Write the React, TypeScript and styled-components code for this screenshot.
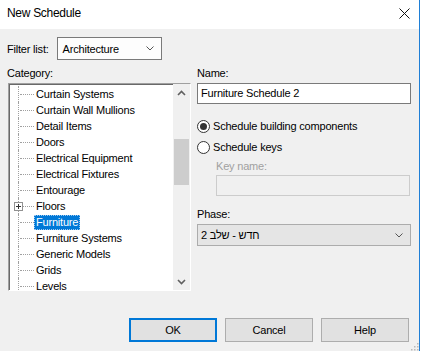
import styled, { createGlobalStyle } from "styled-components";

const GlobalStyle = createGlobalStyle`
  html, body {
    margin: 0;
    padding: 0;
    background: #ffffff;
  }
  body {
    font-family: "Liberation Sans", Arial, sans-serif;
    font-size: 11px;
    letter-spacing: -0.2px;
    color: #000;
  }
`;

const categories = [
  "Curtain Systems",
  "Curtain Wall Mullions",
  "Detail Items",
  "Doors",
  "Electrical Equipment",
  "Electrical Fixtures",
  "Entourage",
  "Floors",
  "Furniture",
  "Furniture Systems",
  "Generic Models",
  "Grids",
  "Levels",
];

const Chevron = () => (
  <svg width={8} height={5} viewBox="0 0 8 5">
    <polyline points="0.5,0.5 4,4 7.5,0.5" fill="none" stroke="#555" strokeWidth="1" />
  </svg>
);

export default function App() {
  return (
    <>
      <GlobalStyle />
      <Frame>
        <TitleBar>
          <Title>New Schedule</Title>
          <CloseBtn>
            <svg width="11" height="11" viewBox="0 0 11 11">
              <path d="M0.5 0.5 L10.5 10.5 M10.5 0.5 L0.5 10.5" stroke="#111" strokeWidth="1" />
            </svg>
          </CloseBtn>
        </TitleBar>
        <Body>
          <FilterRow>
            <span>Filter list:</span>
            <Combo width={105}>
              <span>Architecture</span>
              <Chevron />
            </Combo>
          </FilterRow>

          <Columns>
            <LeftCol>
              <Label>Category:</Label>
              <TreeBox>
                <TreeList>
                  {categories.map((c) => (
                    <TreeRow key={c}>
                      <Connector>
                        {c === "Floors" && (
                          <Expander>
                            <svg width="9" height="9" viewBox="0 0 9 9">
                              <rect x="0.5" y="0.5" width="8" height="8" fill="#fff" stroke="#919191" />
                              <path d="M2 4.5 H7 M4.5 2 V7" stroke="#333" strokeWidth="1" />
                            </svg>
                          </Expander>
                        )}
                      </Connector>
                      <ItemText selected={c === "Furniture"}>{c}</ItemText>
                    </TreeRow>
                  ))}
                </TreeList>
                <ScrollBar>
                  <ScrollArrow>
                    <svg width="9" height="6" viewBox="0 0 9 6">
                      <polyline points="1,5 4.5,1.5 8,5" fill="none" stroke="#606060" strokeWidth="1.6" />
                    </svg>
                  </ScrollArrow>
                  <ScrollTrack>
                    <Thumb />
                  </ScrollTrack>
                  <ScrollArrow>
                    <svg width="9" height="6" viewBox="0 0 9 6">
                      <polyline points="1,1 4.5,4.5 8,1" fill="none" stroke="#606060" strokeWidth="1.6" />
                    </svg>
                  </ScrollArrow>
                </ScrollBar>
              </TreeBox>
            </LeftCol>

            <RightCol>
              <Label>Name:</Label>
              <TextBox>Furniture Schedule 2</TextBox>
              <RadioRow first>
                <Radio checked />
                <span>Schedule building components</span>
              </RadioRow>
              <RadioRow>
                <Radio />
                <span>Schedule keys</span>
              </RadioRow>
              <Indented>
                <Label disabled>Key name:</Label>
                <TextBox disabled />
              </Indented>
              <PhaseLabel>Phase:</PhaseLabel>
              <Combo width={214} filled>
                <span>חדש - שלב 2</span>
                <Chevron />
              </Combo>
            </RightCol>
          </Columns>

          <ButtonRow>
            <Button primary>OK</Button>
            <Button>Cancel</Button>
            <Button>Help</Button>
          </ButtonRow>
          <Grip>
            <svg width="10" height="10" viewBox="0 0 10 10">
              {[
                [8, 2],
                [5, 5],
                [8, 5],
                [2, 8],
                [5, 8],
                [8, 8],
              ].map(([x, y]) => (
                <rect key={`${x}-${y}`} x={x} y={y} width="1.5" height="1.5" fill="#b8b8b8" />
              ))}
            </svg>
          </Grip>
        </Body>
      </Frame>
    </>
  );
}

const Frame = styled.div`
  width: 419px;
  height: 351px;
  border-right: 1px solid #1f7fd6;
  display: flex;
  flex-direction: column;
`;

const TitleBar = styled.div`
  height: 29px;
  background: #fff;
  display: flex;
  align-items: center;
  justify-content: space-between;
  padding: 0 9px 3px 7px;
  box-sizing: border-box;
`;

const Title = styled.div`
  font-size: 12px;
  letter-spacing: -0.3px;
`;

const CloseBtn = styled.div`
  display: flex;
  align-items: center;
`;

const Body = styled.div`
  position: relative;
  flex: 1;
  background: #f0f0f0;
  display: flex;
  flex-direction: column;
  padding: 8px 8px 9px 7px;
`;

const FilterRow = styled.div`
  display: flex;
  align-items: center;
  gap: 8px;
  height: 23px;
`;

const Combo = styled.div<{ width: number; filled?: boolean }>`
  box-sizing: border-box;
  width: ${(p) => p.width}px;
  height: ${(p) => (p.filled ? 22 : 23)}px;
  border: 1px solid ${(p) => (p.filled ? "#acacac" : "#7a7a7a")};
  background: ${(p) => (p.filled ? "#e5e5e5" : "#fdfdfd")};
  display: flex;
  align-items: center;
  justify-content: space-between;
  padding: 0 7px 0 ${(p) => (p.filled ? 3 : 5)}px;
`;

const Columns = styled.div`
  display: flex;
  gap: 6px;
  margin-top: 6px;
`;

const LeftCol = styled.div`
  width: 184px;
  display: flex;
  flex-direction: column;
`;

const RightCol = styled.div`
  width: 214px;
  display: flex;
  flex-direction: column;
`;

const Label = styled.div<{ disabled?: boolean }>`
  height: 15px;
  line-height: 15px;
  margin-bottom: ${(p) => (p.disabled ? 1 : 2)}px;
  color: ${(p) => (p.disabled ? "#a0a0a0" : "#000")};
`;

const PhaseLabel = styled(Label)`
  margin-top: 11px;
`;

const TreeBox = styled.div`
  box-sizing: border-box;
  margin-left: 1px;
  width: 183px;
  height: 208px;
  background: #fff;
  border: 1px solid;
  border-color: #a0a0a0 #ffffff #ffffff #a0a0a0;
  box-shadow: inset 1px 1px 0 #696969;
  display: flex;
  overflow: hidden;
`;

const TreeList = styled.div`
  flex: 1;
  padding: 2px 0 0 9px;
  overflow: hidden;
  display: flex;
  flex-direction: column;
`;

const TreeRow = styled.div`
  height: 16px;
  flex-shrink: 0;
  display: flex;
  align-items: stretch;
`;

const Connector = styled.div`
  position: relative;
  width: 15px;
  border-left: 1px dotted #a0a0a0;
  &::after {
    content: "";
    position: absolute;
    left: 1px;
    right: 0;
    top: 8px;
    border-top: 1px dotted #a0a0a0;
  }
`;

const Expander = styled.div`
  position: absolute;
  left: -5px;
  top: 4px;
  z-index: 1;
  display: flex;
`;

const ItemText = styled.div<{ selected?: boolean }>`
  align-self: center;
  height: 15px;
  line-height: 15px;
  padding: 0 2px;
  white-space: nowrap;
  box-sizing: border-box;
  background: ${(p) => (p.selected ? "#0078d7" : "transparent")};
  color: ${(p) => (p.selected ? "#fff" : "#000")};
  outline: ${(p) => (p.selected ? "1px dotted #9ec8f0" : "none")};
  outline-offset: -1px;
`;

const ScrollBar = styled.div`
  width: 17px;
  flex-shrink: 0;
  background: #f0f0f0;
  display: flex;
  flex-direction: column;
`;

const ScrollArrow = styled.div`
  height: 17px;
  display: flex;
  align-items: center;
  justify-content: center;
`;

const ScrollTrack = styled.div`
  flex: 1;
  padding-top: 38px;
`;

const Thumb = styled.div`
  margin: 0 1px;
  height: 46px;
  background: #cdcdcd;
`;

const TextBox = styled.div<{ disabled?: boolean }>`
  box-sizing: border-box;
  height: 21px;
  line-height: 19px;
  padding: 0 3px;
  border: 1px solid ${(p) => (p.disabled ? "#cccccc" : "#7a7a7a")};
  background: ${(p) => (p.disabled ? "#f0f0f0" : "#fff")};
`;

const RadioRow = styled.div<{ first?: boolean }>`
  display: flex;
  align-items: center;
  gap: 3px;
  height: 16px;
  margin-top: ${(p) => (p.first ? 14 : 5)}px;
`;

const Radio = styled.span<{ checked?: boolean }>`
  box-sizing: border-box;
  width: 13px;
  height: 13px;
  border-radius: 50%;
  border: 1px solid #333;
  background: #fff;
  display: inline-flex;
  align-items: center;
  justify-content: center;
  &::after {
    content: "";
    width: 7px;
    height: 7px;
    border-radius: 50%;
    background: ${(p) => (p.checked ? "#333" : "transparent")};
  }
`;

const Indented = styled.div`
  margin: 4px 1px 0 19px;
  display: flex;
  flex-direction: column;
`;

const ButtonRow = styled.div`
  margin-top: auto;
  margin-right: 2px;
  display: flex;
  justify-content: flex-end;
  gap: 8px;
`;

const Button = styled.div<{ primary?: boolean }>`
  box-sizing: border-box;
  width: 88px;
  height: 24px;
  display: flex;
  align-items: center;
  justify-content: center;
  background: #e1e1e1;
  border: 1px solid ${(p) => (p.primary ? "#0078d7" : "#adadad")};
  box-shadow: ${(p) => (p.primary ? "inset 0 0 0 1px #0078d7" : "none")};
`;

const Grip = styled.div`
  position: absolute;
  right: 0;
  bottom: 0;
  display: flex;
`;
